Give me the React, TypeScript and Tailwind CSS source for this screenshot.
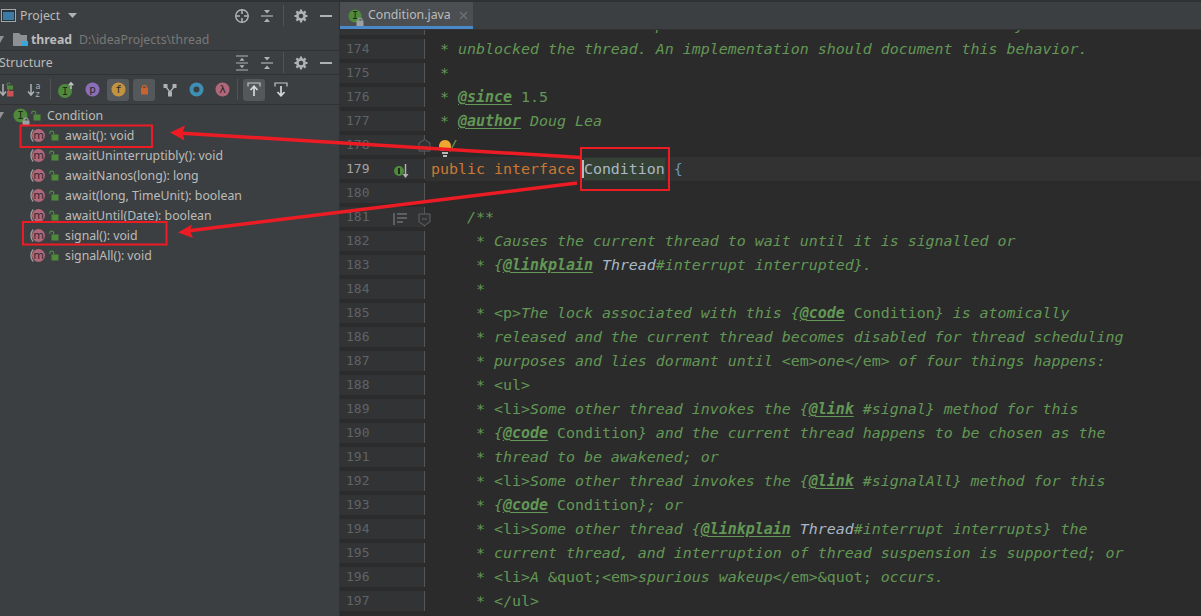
const uiFont = "font-['Noto_Sans',sans-serif]";

const codeLines: [number, string][] = [
  [173, " * shown that the interrupt occurred after another action that may have"],
  [174, " * unblocked the thread. An implementation should document this behavior."],
  [175, " *"],
  [176, " * @since 1.5"],
  [177, " * @author Doug Lea"],
  [178, " */"],
  [179, ""],
  [180, ""],
  [181, "    /**"],
  [182, "     * Causes the current thread to wait until it is signalled or"],
  [183, "     * {@linkplain Thread#interrupt interrupted}."],
  [184, "     *"],
  [185, "     * <p>The lock associated with this {@code Condition} is atomically"],
  [186, "     * released and the current thread becomes disabled for thread scheduling"],
  [187, "     * purposes and lies dormant until <em>one</em> of four things happens:"],
  [188, "     * <ul>"],
  [189, "     * <li>Some other thread invokes the {@link #signal} method for this"],
  [190, "     * {@code Condition} and the current thread happens to be chosen as the"],
  [191, "     * thread to be awakened; or"],
  [192, "     * <li>Some other thread invokes the {@link #signalAll} method for this"],
  [193, "     * {@code Condition}; or"],
  [194, "     * <li>Some other thread {@linkplain Thread#interrupt interrupts} the"],
  [195, "     * current thread, and interruption of thread suspension is supported; or"],
  [196, "     * <li>A &quot;<em>spurious wakeup</em>&quot; occurs."],
  [197, "     * </ul>"],
];

const methods = [
  "await(): void",
  "awaitUninterruptibly(): void",
  "awaitNanos(long): long",
  "await(long, TimeUnit): boolean",
  "awaitUntil(Date): boolean",
  "signal(): void",
  "signalAll(): void",
];

function renderComment(line: string) {
  const parts = line.split(/(@\w+|<\/?\w+>|&quot;|\b1\.5\b|Condition(?=\})|Thread(?=#))/);
  return parts.map((part, i) => {
    if (part.startsWith("@")) {
      return (
        <span key={i} className="font-bold underline underline-offset-2">
          {part}
        </span>
      );
    }
    if (part === "Thread") {
      return (
        <span key={i} className="text-[#a9b7c6]">
          {part}
        </span>
      );
    }
    if (i % 2 === 1) {
      return (
        <span key={i} className="not-italic">
          {part}
        </span>
      );
    }
    return <span key={i}>{part}</span>;
  });
}

function Lock({ open = true, color = "#4f8a3c" }: { open?: boolean; color?: string }) {
  return (
    <svg width="10" height="11" viewBox="0 0 10 11" className="shrink-0">
      <rect x="2.5" y="4.5" width="7" height="6" fill={color} />
      <path
        d={open ? "M0.8 4V2.6C0.8 0.6 4.6 0.6 4.6 2.6V4.5" : "M3.8 4.5V3C3.8 1 8.2 1 8.2 3V4.5"}
        fill="none"
        stroke={color}
        strokeWidth="1.2"
      />
    </svg>
  );
}

function Badge({ letter, fill, ink = "#2b2b2b", size = 15 }: { letter: string; fill: string; ink?: string; size?: number }) {
  return (
    <svg width={size} height={size} viewBox="0 0 15 15" className="shrink-0">
      <circle cx="7.5" cy="7.5" r="7" fill={fill} />
      <text x="7.5" y="11" textAnchor="middle" fontSize="11" fontFamily="'DejaVu Sans Mono', monospace" fill={ink}>
        {letter}
      </text>
    </svg>
  );
}

function MethodIcon() {
  return (
    <svg width="16" height="15" viewBox="0 0 16 15" className="shrink-0">
      <path d="M3.2 1.5C0.2 4.5 0.2 10.5 3.2 13.5" fill="none" stroke="#9a9c9e" strokeWidth="1.4" />
      <circle cx="8.5" cy="7.5" r="6.5" fill="#b0677a" />
      <text x="8.5" y="11" textAnchor="middle" fontSize="11" fontFamily="'DejaVu Sans', sans-serif" fill="#2f2a2c">
        m
      </text>
    </svg>
  );
}

function InterfaceIcon({ size = 15 }: { size?: number }) {
  return (
    <span className="relative block shrink-0">
      <Badge letter="I" fill="#4f8a3c" ink="#1f2b1a" size={size} />
      <svg width="8" height="9" viewBox="0 0 8 9" className="absolute -bottom-[3px] -right-[2px]">
        <rect x="0.5" y="3.5" width="7" height="5.5" fill="#9da0a3" />
        <path d="M2 3.5V2.5C2 0.4 6 0.4 6 2.5V3.5" fill="none" stroke="#9da0a3" strokeWidth="1.1" />
      </svg>
    </span>
  );
}

function CollapseIcon() {
  return (
    <svg width="14" height="14" viewBox="0 0 14 14" className="shrink-0">
      <path d="M1 7H13" stroke="#afb1b3" strokeWidth="1.2" />
      <path d="M4 1H10L7 4.5Z M4 13H10L7 9.5Z" fill="#afb1b3" />
    </svg>
  );
}

function ExpandIcon() {
  return (
    <svg width="14" height="16" viewBox="0 0 14 16" className="shrink-0">
      <path d="M1 1H13M1 8H13M1 15H13" stroke="#afb1b3" strokeWidth="1.2" />
      <path d="M4.5 5.8H9.5L7 2.8Z M4.5 10.2H9.5L7 13.2Z" fill="#afb1b3" />
    </svg>
  );
}

function GearIcon() {
  return (
    <svg width="14" height="14" viewBox="0 0 14 14" className="shrink-0">
      <circle cx="7" cy="7" r="3.6" fill="none" stroke="#afb1b3" strokeWidth="2.6" />
      <path
        d="M7 0.5V3M7 11V13.5M0.5 7H3M11 7H13.5M2.4 2.4L4.1 4.1M9.9 9.9L11.6 11.6M11.6 2.4L9.9 4.1M4.1 9.9L2.4 11.6"
        stroke="#afb1b3"
        strokeWidth="2.2"
      />
    </svg>
  );
}

function HeaderTools({ first }: { first: React.ReactNode }) {
  return (
    <div className="ml-auto flex items-center">
      <span className="flex w-4 justify-center">{first}</span>
      <span className="ml-[9px] flex w-4 justify-center">
        <CollapseIcon />
      </span>
      <span className="ml-[8px] h-[21px] w-px bg-[#515355]" />
      <span className="ml-[9px] flex w-4 justify-center">
        <GearIcon />
      </span>
      <span className="ml-[11px] mr-[7px] h-[2px] w-[12px] bg-[#afb1b3]" />
    </div>
  );
}

function ToolButton({ active, className, children }: { active?: boolean; className?: string; children: React.ReactNode }) {
  return (
    <span
      className={`flex h-[22px] w-[22px] shrink-0 items-center justify-center rounded-[3px] ${active ? "bg-[#55585a]" : ""} ${className ?? ""}`}
    >
      {children}
    </span>
  );
}

function Toolbar() {
  return (
    <div className="flex h-[31px] items-center border-y border-[#323232]">
      <ToolButton className="-ml-[4px]">
        <svg width="16" height="16" viewBox="0 0 16 16">
          <path d="M4 2V12M1 9.5L4 13L7 9.5" fill="none" stroke="#afb1b3" strokeWidth="1.5" />
          <rect x="8" y="9" width="6.5" height="5.5" fill="#c75450" />
          <path d="M9.5 9V7.5C9.5 5.5 12.5 5.5 12.5 7.5" fill="none" stroke="#c75450" strokeWidth="1.1" />
          <rect x="8" y="3.5" width="6" height="4" fill="#4f8a3c" />
          <path d="M8 3.5V2.5C8 0.6 11 0.6 11 2.2" fill="none" stroke="#4f8a3c" strokeWidth="1.1" />
        </svg>
      </ToolButton>
      <ToolButton className="ml-[6px]">
        <svg width="16" height="16" viewBox="0 0 16 16">
          <path d="M4 2V12M1 9.5L4 13L7 9.5" fill="none" stroke="#afb1b3" strokeWidth="1.5" />
          <text x="8.5" y="7" fontSize="8" fontFamily="'DejaVu Sans', sans-serif" fill="#afb1b3">
            a
          </text>
          <text x="8.5" y="15" fontSize="8" fontFamily="'DejaVu Sans', sans-serif" fill="#afb1b3">
            z
          </text>
        </svg>
      </ToolButton>
      <span className="ml-[4px] h-[21px] w-px bg-[#515355]" />
      <ToolButton className="ml-[4px]">
        <svg width="18" height="18" viewBox="0 0 18 18">
          <circle cx="8" cy="10" r="7" fill="#4f8a3c" />
          <text x="8" y="13.5" textAnchor="middle" fontSize="10" fontFamily="'DejaVu Sans Mono', monospace" fill="#1f2b1a">
            I
          </text>
          <path d="M14 8V2M11.7 4.3L14 1.8L16.3 4.3" fill="none" stroke="#c4c6c8" strokeWidth="1.4" />
        </svg>
      </ToolButton>
      <ToolButton className="ml-[4px]">
        <Badge letter="p" fill="#8a6fb8" />
      </ToolButton>
      <ToolButton active className="ml-[4px]">
        <Badge letter="f" fill="#c4933f" />
      </ToolButton>
      <ToolButton active className="ml-[4px]">
        <svg width="9" height="11" viewBox="0 0 9 11">
          <rect x="1" y="4" width="7" height="6.5" fill="#c8622e" />
          <path d="M2.5 4V2.8C2.5 0.8 6.5 0.8 6.5 2.8V4" fill="none" stroke="#c8622e" strokeWidth="1.2" />
        </svg>
      </ToolButton>
      <ToolButton className="ml-[4px]">
        <svg width="14" height="14" viewBox="0 0 14 14">
          <rect x="0.5" y="1" width="4" height="4" fill="#afb1b3" />
          <rect x="9.5" y="1" width="4" height="4" fill="#afb1b3" />
          <rect x="5" y="8.5" width="4" height="5" fill="#afb1b3" />
          <path d="M3 4L7 9L11 4" fill="none" stroke="#afb1b3" strokeWidth="1.3" />
        </svg>
      </ToolButton>
      <ToolButton className="ml-[4px]">
        <svg width="15" height="15" viewBox="0 0 15 15">
          <circle cx="7.5" cy="7.5" r="5" fill="none" stroke="#3d8fb5" strokeWidth="4" />
        </svg>
      </ToolButton>
      <ToolButton className="ml-[4px]">
        <Badge letter="λ" fill="#b0677a" />
      </ToolButton>
      <span className="ml-[4px] h-[21px] w-px bg-[#515355]" />
      <ToolButton active className="ml-[5px]">
        <svg width="14" height="15" viewBox="0 0 14 15">
          <path d="M1 4.5V1H13V4.5" fill="none" stroke="#c4c6c8" strokeWidth="1.2" />
          <path d="M7 14V5M3.5 8L7 4.2L10.5 8" fill="none" stroke="#d5d7d9" strokeWidth="1.7" />
        </svg>
      </ToolButton>
      <ToolButton className="ml-[5px]">
        <svg width="14" height="15" viewBox="0 0 14 15">
          <path d="M1 4.5V1H13V4.5" fill="none" stroke="#c4c6c8" strokeWidth="1.2" />
          <path d="M7 4V13M3.5 10L7 13.8L10.5 10" fill="none" stroke="#d5d7d9" strokeWidth="1.7" />
        </svg>
      </ToolButton>
    </div>
  );
}

function ProjectPanel() {
  return (
    <aside className={`flex w-[339px] shrink-0 flex-col bg-[#3c3f41] text-[12.3px] text-[#bbbbbb] ${uiFont}`}>
      <div className="flex h-[27px] items-center pl-px">
        <svg width="15" height="13" viewBox="0 0 15 13" className="shrink-0">
          <rect x="0.5" y="0.5" width="14" height="12" fill="#27343c" stroke="#a3a6a8" />
          <rect x="2" y="3" width="11" height="8" fill="#3a7ca5" />
        </svg>
        <span className="ml-[4px] pt-px">Project</span>
        <svg width="9" height="5" viewBox="0 0 9 5" className="ml-[8px]">
          <path d="M0 0H9L4.5 5Z" fill="#afb1b3" />
        </svg>
        <HeaderTools
          first={
            <svg width="16" height="16" viewBox="0 0 16 16">
              <circle cx="8" cy="8" r="6.2" fill="none" stroke="#afb1b3" strokeWidth="1.4" />
              <path d="M8 1V6M8 10V15M1 8H6M10 8H15" stroke="#afb1b3" strokeWidth="1.6" />
            </svg>
          }
        />
      </div>
      <div className="flex h-[21px] items-center">
        <span className="h-0 w-0 -translate-x-[4px] border-x-[4px] border-t-[7px] border-x-transparent border-t-[#8f9193]" />
        <svg width="15" height="13" viewBox="0 0 15 13" className="ml-[5px] shrink-0">
          <path d="M0 0H6L8 2H14V13H0Z" fill="#8d9194" />
          <rect x="9" y="8" width="6" height="5" fill="#3ba5d9" />
        </svg>
        <span className="ml-[3px] pt-[2px] font-bold">thread</span>
        <span className="ml-[7px] pt-[2px] text-[#787878]">D:\ideaProjects\thread</span>
      </div>
      <div className="flex h-[24px] items-center border-t border-[#323232]">
        <span className="-ml-px pt-px">Structure</span>
        <HeaderTools first={<ExpandIcon />} />
      </div>
      <Toolbar />
      <div className="flex h-5 items-center">
        <span className="h-0 w-0 -translate-x-[4px] border-x-[4px] border-t-[7px] border-x-transparent border-t-[#8f9193]" />
        <span className="ml-[5px]">
          <InterfaceIcon />
        </span>
        <span className="ml-[3px]">
          <Lock />
        </span>
        <span className="ml-[6px] pt-[2px]">Condition</span>
      </div>
      {methods.map((method) => (
        <div key={method} className="flex h-5 items-center pl-[30px]">
          <MethodIcon />
          <span className="ml-[3px]">
            <Lock />
          </span>
          <span className="ml-[6px] pt-[2px]">{method}</span>
        </div>
      ))}
    </aside>
  );
}

function Gutter({ line }: { line: number }) {
  const current = line === 179;
  return (
    <div className="relative flex w-[85px] shrink-0 items-center border-r border-[#555555] bg-[#313335] pl-[6px]">
      <span className={`text-[13px] ${current ? "text-[#a4a3a3]" : "text-[#606366]"}`}>{line}</span>
      {current && (
        <svg width="18" height="16" viewBox="0 0 18 16" className="absolute left-[53px] top-[4px]">
          <circle cx="6" cy="8" r="5" fill="#4f8a3c" />
          <rect x="5" y="5" width="2" height="6" fill="#1f2b1a" />
          <path d="M12.5 1V12" stroke="#afb1b3" strokeWidth="1.5" />
          <path d="M9.5 11H15.5L12.5 15Z" fill="#afb1b3" />
        </svg>
      )}
      {line === 181 && (
        <svg width="16" height="14" viewBox="0 0 16 14" className="absolute left-[53px] top-[5px]">
          <path d="M1 1V13" stroke="#5c6063" strokeWidth="2" />
          <path d="M4 2H14M4 6H14M4 10H10" stroke="#5c6063" strokeWidth="2" />
        </svg>
      )}
      {line === 178 && (
        <svg width="13" height="13" viewBox="0 0 13 13" className="absolute -right-[7px] top-[4px]">
          <path d="M1 12V4L6.5 0.5L12 4V12Z" fill="#313335" stroke="#606366" />
          <path d="M4 8H9" stroke="#606366" />
        </svg>
      )}
      {line === 181 && (
        <svg width="13" height="13" viewBox="0 0 13 13" className="absolute -right-[7px] top-[6px]">
          <path d="M1 1V9L6.5 12.5L12 9V1Z" fill="#313335" stroke="#606366" />
          <path d="M4 6H9" stroke="#606366" />
        </svg>
      )}
    </div>
  );
}

function CodeRow({ line, text }: { line: number; text: string }) {
  const current = line === 179;
  return (
    <div className="flex h-6 items-center">
      <Gutter line={line} />
      <div
        className={`flex h-6 flex-1 items-center whitespace-pre pl-[6px] text-[14.95px] ${
          current ? "bg-[#323232]" : ""
        }`}
      >
        {current ? (
          <>
            <span className="text-[#cc7832]">public interface </span>
            <span className="bg-[#344134] text-[#a9b7c6]">
              <span className="border-l-2 border-[#bbbbbb] -ml-[2px]">Condition</span>
            </span>
            <span className="text-[#6897bb]"> {"{"}</span>
          </>
        ) : (
          <span className="italic text-[#629755]">{renderComment(text)}</span>
        )}
      </div>
    </div>
  );
}

function Editor() {
  return (
    <main className="flex min-w-0 flex-1 flex-col border-l border-[#323232] bg-[#2b2b2b]">
      <div className={`z-10 flex h-[27px] shrink-0 bg-[#3c3f41] shadow-[0_1px_0_#323232] ${uiFont}`}>
        <div className="flex w-[133px] items-center border-b-[3px] border-[#4a88c7] bg-[#4b4f51] pl-[8px] pt-[3px] text-[12.3px] text-[#bbbbbb]">
          <InterfaceIcon size={14} />
          <span className="ml-[6px]">Condition.java</span>
          <svg width="9" height="9" viewBox="0 0 9 9" className="ml-[8px]">
            <path d="M1 1L8 8M8 1L1 8" stroke="#6f7274" strokeWidth="1.2" />
          </svg>
        </div>
      </div>
      <div className="min-h-0 flex-1 overflow-hidden font-['DejaVu_Sans_Mono',monospace]">
        <div className="-mt-[16px]">
          {codeLines.map(([line, text]) => (
            <CodeRow key={line} line={line} text={text} />
          ))}
        </div>
      </div>
    </main>
  );
}

export default function App() {
  return (
    <div className="relative h-[616px] w-[1201px] overflow-hidden bg-[#3c3f41]">
      <div className="h-[2px] bg-[#2f3133]" />
      <div className="flex h-[614px]">
        <ProjectPanel />
        <Editor />
      </div>
      {/* red annotations drawn over the screenshot */}
      <svg width="1201" height="616" viewBox="0 0 1201 616" className="pointer-events-none absolute left-0 top-0">
        <svg x="433" y="139" width="24" height="26" viewBox="0 0 24 26">
          <path d="M12 1C8 1 6 4 6 7.5V9H18V7.5C18 4 16 1 12 1Z" fill="#f0a732" />
          <path d="M8 11H16M9 14H15M10 17H14" stroke="#e8e8e8" strokeWidth="1.5" />
        </svg>
        <g fill="none" stroke="#ed1c24" strokeWidth="2">
          <rect x="20.5" y="125.5" width="131.5" height="21.5" />
          <rect x="23" y="222" width="143.5" height="22.5" />
          <rect x="581" y="148" width="88" height="42" />
        </g>
        <path d="M581 157.5L182 133.2" stroke="#ed1c24" strokeWidth="3.5" />
        <path d="M577 183L189 230.8" stroke="#ed1c24" strokeWidth="3.5" />
        <path d="M170 132.5L185 125.5L182.5 133L184.5 140.5Z" fill="#ed1c24" />
        <path d="M178 232.5L192 224.5L190 231L193 238Z" fill="#ed1c24" />
      </svg>
    </div>
  );
}
